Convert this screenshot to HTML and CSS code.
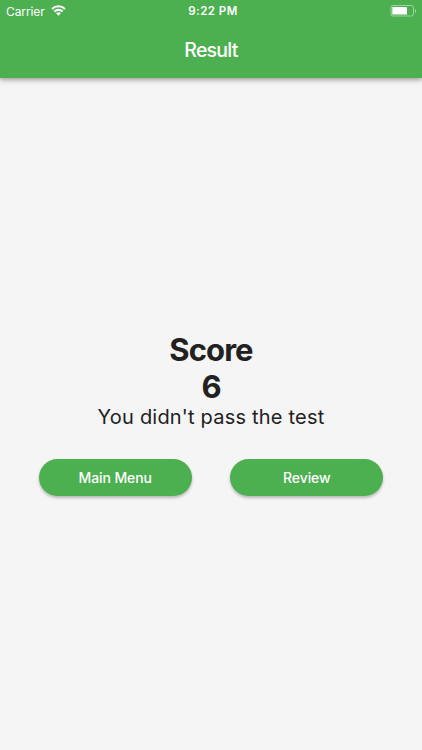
FILE: index.html
```html
<!DOCTYPE html>
<html lang="en">
  <head>
    <meta charset="UTF-8" />
    <meta name="viewport" content="width=device-width, initial-scale=1.0" />
    <title>Result</title>
    <link rel="stylesheet" href="styles.css">
  </head>
  <body>
    <header class="app-bar">
      <div class="status-bar">
        <div class="carrier">
          <span>Carrier</span>
          <svg class="wifi" width="15" height="11" viewBox="0 0 15 11">
            <path d="M.3 3.3a10.2 10.2 0 0 1 14.4 0l-1.3 1.5a8.3 8.3 0 0 0-11.8 0z" />
            <path d="M2.6 5.8a6.9 6.9 0 0 1 9.8 0L10.9 7.4a4.8 4.8 0 0 0-6.8 0z" />
            <path d="M7.5 10.8 5.1 8.3a3.5 3.5 0 0 1 4.8 0z" />
          </svg>
        </div>
        <span class="time">9:22 PM</span>
        <svg class="battery" width="27" height="12" viewBox="0 0 27 12">
          <rect x="1" y="0.5" width="22.5" height="10.5" rx="2" fill="none" stroke="#fff" stroke-opacity="0.45" />
          <rect x="2.3" y="2" width="14.7" height="7.5" rx="0.5" fill="#fff" />
          <path d="M25 4v4a2.2 2.2 0 0 0 0-4z" fill="#fff" fill-opacity="0.45" />
        </svg>
      </div>
      <h1 class="title">Result</h1>
    </header>

    <main class="result">
      <h2 class="score">Score</h2>
      <p class="score">6</p>
      <p class="message">You didn't pass the test</p>
      <div class="actions">
        <button type="button">Main Menu</button>
        <button type="button">Review</button>
      </div>
    </main>
  </body>
</html>
```

FILE: styles.css
```css
* {
  margin: 0;
  padding: 0;
  box-sizing: border-box;
}
body {
  font-family: Inter, Roboto, sans-serif;
  background: #f5f5f5;
  color: #212121;
  display: flex;
  flex-direction: column;
  height: 100vh;
}
.app-bar {
  height: 78px;
  background: #4caf50;
  color: #fff;
  box-shadow: 0 2px 4px rgba(0, 0, 0, 0.25), 0 1px 8px rgba(0, 0, 0, 0.15);
}
.status-bar {
  height: 22px;
  padding: 0 5px 0 6px;
  display: grid;
  grid-template-columns: 1fr auto 1fr;
  align-items: center;
  font-size: 12px;
}
.carrier {
  display: flex;
  align-items: center;
  gap: 6px;
  letter-spacing: -0.1px;
}
.wifi {
  fill: #fff;
  margin-top: -2px;
}
.time {
  font-size: 11.5px;
  font-weight: 600;
  letter-spacing: 0.45px;
  padding-left: 3px;
}
.battery {
  justify-self: end;
}
.title {
  font-size: 19.5px;
  font-weight: 500;
  line-height: 56px;
  letter-spacing: -0.75px;
  text-align: center;
}
.result {
  flex: 1;
  display: flex;
  flex-direction: column;
  justify-content: center;
  text-align: center;
  padding-bottom: 1px;
}
.score {
  font-size: 31px;
  font-weight: 700;
  line-height: 37px;
  letter-spacing: -0.9px;
}
.message {
  font-size: 20px;
  line-height: 25px;
  letter-spacing: 0.2px;
}
.actions {
  display: flex;
  justify-content: space-evenly;
  margin-top: 29px;
}
button {
  width: 153px;
  height: 37px;
  border: none;
  border-radius: 19px;
  background: #4caf50;
  color: #fff;
  font-family: inherit;
  font-size: 14px;
  font-weight: 500;
  letter-spacing: -0.1px;
  cursor: pointer;
  box-shadow: 0 2px 3px rgba(0, 0, 0, 0.25);
}
```
